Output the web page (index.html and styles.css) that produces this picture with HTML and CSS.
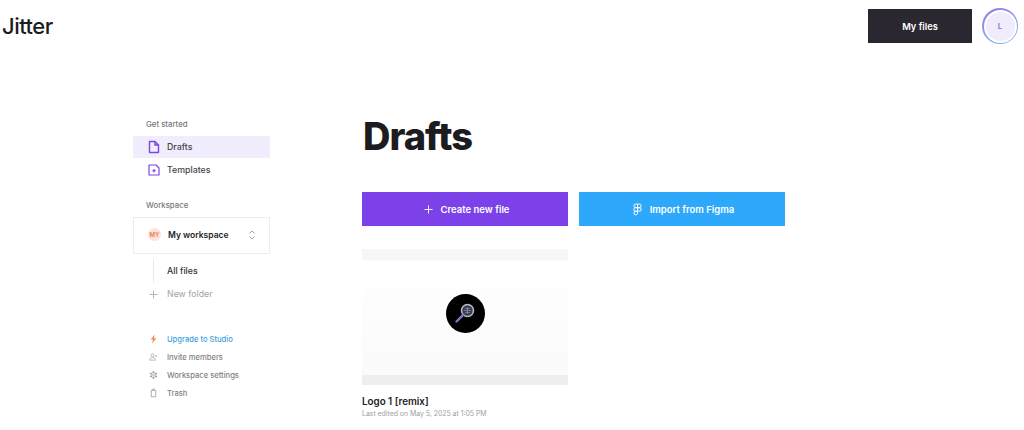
FILE: index.html
```html
<!DOCTYPE html>
<html lang="en">
<head>
    <meta charset="UTF-8">
    <meta name="viewport" content="width=device-width, initial-scale=1.0">
    <title>Jitter - Drafts</title>
    <link rel="stylesheet" href="styles.css">
</head>
<body>
    <header class="topbar">
        <div class="logo">Jitter</div>
        <div class="topbar-right">
            <button class="files-button">My files</button>
            <div class="avatar"><span>L</span></div>
        </div>
    </header>

    <div class="layout">
        <aside class="sidebar">
            <div class="side-label">Get started</div>
            <a class="nav-item active">
                <svg class="nav-icon" viewBox="0 0 14 14" fill="none" stroke="#7c45e8" stroke-width="1.4"><path d="M2.500 1.500h5.500l3.500 3.500v7.500h-9z" stroke-linejoin="round"/><path d="M8 1.500v3.500h3.500"/></svg>
                Drafts
            </a>
            <a class="nav-item">
                <svg class="nav-icon" viewBox="0 0 14 14" fill="none" stroke="#7c45e8" stroke-width="1.2"><path d="M2 2h7l3 3v7H2z" stroke-linejoin="round"/><path d="M7 6v3.500M5.250 7.750h3.500"/></svg>
                Templates
            </a>

            <div class="side-label workspace-label">Workspace</div>
            <div class="workspace">
                <span class="workspace-badge">MY</span>
                <span class="workspace-name">My workspace</span>
                <svg class="workspace-caret" viewBox="0 0 8 12" fill="none" stroke="#9a9a9a" stroke-width="0.9"><path d="M1.500 4.500 4 2l2.500 2.500M1.500 7.500 4 10l2.500-2.500"/></svg>
            </div>

            <div class="folders">
                <div class="folder-item">All files</div>
            </div>
            <a class="new-folder">
                <svg class="new-folder-icon" viewBox="0 0 10 10" fill="none" stroke="#a8a8a8" stroke-width="0.9"><path d="M5 0.500v9M0.500 5h9"/></svg>
                New folder
            </a>

            <div class="side-links">
                <a class="side-link upgrade">
                    <svg class="link-icon" viewBox="0 0 10 10"><path d="M6.200 0 2 5.600h2.300L3.600 10 8 4.300H5.500z" fill="#ee8a55"/></svg>
                    Upgrade to Studio
                </a>
                <a class="side-link">
                    <svg class="link-icon" viewBox="0 0 10 10" fill="none" stroke="#999" stroke-width="0.7"><circle cx="4" cy="3.200" r="1.700"/><path d="M0.800 8.500c0-2 1.400-2.800 3.200-2.800s3.200 0.800 3.200 2.800z"/><path d="M8 3v2M7 4h2"/></svg>
                    Invite members
                </a>
                <a class="side-link">
                    <svg class="link-icon" viewBox="0 0 10 10" fill="none" stroke="#999"><circle cx="5" cy="5" r="2.800" stroke-width="1"/><path d="M5 0.500v1.500M5 8v1.500M1.100 2.750l1.300 0.750M7.600 6.500l1.300 0.750M1.100 7.250l1.300-0.750M7.600 3.500l1.300-0.750" stroke-width="1.200"/><circle cx="5" cy="5" r="1" stroke-width="0.7"/></svg>
                    Workspace settings
                </a>
                <a class="side-link">
                    <svg class="link-icon" viewBox="0 0 10 10" fill="none" stroke="#999" stroke-width="0.9"><path d="M2.500 2.200h5v7h-5zM3.200 0.800h3.600"/></svg>
                    Trash
                </a>
            </div>
        </aside>

        <main class="main">
            <h1>Drafts</h1>
            <div class="actions">
                <button class="action create">
                    <svg class="action-icon" viewBox="0 0 10 10" fill="none" stroke="#fff" stroke-width="1"><path d="M5 0.500v9M0.500 5h9"/></svg>
                    Create new file
                </button>
                <button class="action figma">
                    <svg class="action-icon figma-icon" viewBox="0 0 8 12" fill="none" stroke="#fff" stroke-width="0.900"><path d="M4 1H2.300a1.650 1.650 0 0 0 0 3.300H4zM4 1h1.700a1.650 1.650 0 0 1 0 3.300H4zM4 4.300H2.300a1.650 1.650 0 0 0 0 3.400H4zM4 6a1.700 1.700 0 1 0 3.400 0A1.700 1.700 0 0 0 4 6zM4 7.700H2.300A1.650 1.650 0 1 0 4 9.350z"/></svg>
                    Import from Figma
                </button>
            </div>

            <div class="card">
                <div class="thumb">
                    <div class="thumb-circle">
                        <svg class="thumb-icon" viewBox="0 0 24 24" fill="none">
                            <circle cx="14.500" cy="9.500" r="6" fill="#3a3d52" stroke="#b9bbc6" stroke-width="1.500"/>
                            <path d="M11 9.500h7M14.500 6v7M12 7.500h5M12 11.500h5" stroke="#8b8ea3" stroke-width="0.700"/>
                            <path d="M10.200 13.800 3.500 20.500" stroke="#7b7bc4" stroke-width="2.400" stroke-linecap="round"/>
                        </svg>
                    </div>
                </div>
                <div class="card-title">Logo 1 [remix]</div>
                <div class="card-date">Last edited on May 5, 2025 at 1:05 PM</div>
            </div>
        </main>
    </div>
</body>
</html>
```

FILE: styles.css
```css
* {
    margin: 0;
    padding: 0;
    box-sizing: border-box;
}

body {
    font-family: 'Inter', sans-serif;
    background: white;
    color: #1c1c1e;
    height: 430px;
    overflow: hidden;
}

.topbar {
    display: flex;
    justify-content: space-between;
    align-items: flex-start;
    padding: 8px 6px 0 2px;
    height: 63px;
}

.logo {
    font-size: 22px;
    font-weight: 550;
    letter-spacing: -0.5px;
    line-height: 36px;
}

.topbar-right {
    display: flex;
    align-items: center;
    gap: 10px;
}

.files-button {
    width: 104px;
    height: 34px;
    background: #2a2731;
    color: white;
    border: none;
    font-family: inherit;
    font-size: 9.300px;
    font-weight: 600;
}

.avatar {
    width: 36px;
    height: 36px;
    border-radius: 50%;
    padding: 1.500px;
    background: linear-gradient(160deg, #9a7de8 0%, #7db8ea 100%);
}

.avatar span {
    display: flex;
    align-items: center;
    justify-content: center;
    width: 100%;
    height: 100%;
    border-radius: 50%;
    border: 2px solid white;
    background: #f1ecfc;
    color: #8b6fd8;
    font-size: 8px;
    font-weight: 600;
}

.layout {
    display: flex;
    padding-left: 133px;
}

.sidebar {
    width: 137px;
    margin-right: 92px;
    padding-top: 56px;
}

.side-label {
    font-size: 7.800px;
    font-weight: 500;
    color: #77777b;
    line-height: 10px;
    padding-left: 13px;
    margin-bottom: 7px;
}

.workspace-label {
    margin-top: 19px;
    margin-bottom: 7px;
}

.nav-item {
    display: flex;
    align-items: center;
    gap: 6px;
    height: 22px;
    padding-left: 14px;
    padding-bottom: 1px;
    margin-bottom: 1px;
    font-size: 8.800px;
    font-weight: 500;
    color: #44444a;
}

.nav-item.active {
    background: #f2edfc;
}

.nav-icon {
    width: 14px;
    height: 14px;
}

.workspace {
    display: flex;
    align-items: center;
    height: 37px;
    padding-left: 14px;
    padding-bottom: 2px;
    border: 1px solid #ededed;
}

.workspace-badge {
    display: flex;
    align-items: center;
    justify-content: center;
    width: 13px;
    height: 13px;
    border-radius: 50%;
    background: #fde3d8;
    color: #e8795a;
    font-size: 6px;
    font-weight: 600;
    margin-right: 7px;
}

.workspace-name {
    font-size: 8.500px;
    font-weight: 600;
    color: #222;
}

.workspace-caret {
    width: 8px;
    height: 12px;
    margin-left: 19px;
}

.folders {
    margin-left: 20px;
    border-left: 1px solid #e8e8e8;
    padding-left: 13px;
    margin-top: 5px;
}

.folder-item {
    font-size: 8.800px;
    font-weight: 500;
    color: #333;
    line-height: 24px;
}

.new-folder {
    display: flex;
    align-items: center;
    gap: 9px;
    padding-left: 16px;
    margin-top: 4px;
    font-size: 8.800px;
    color: #a3a3a3;
    line-height: 14px;
}

.new-folder-icon {
    width: 9px;
    height: 9px;
}

.side-links {
    margin-top: 29px;
}

.side-link {
    display: flex;
    align-items: center;
    gap: 9px;
    height: 18px;
    padding-left: 16px;
    font-size: 7.600px;
    font-weight: 500;
    color: #808084;
}

.side-link.upgrade {
    color: #3f9fe0;
}

.link-icon {
    width: 9px;
    height: 10px;
}

.main {
    width: 424px;
    padding-top: 47px;
}

h1 {
    font-size: 38px;
    font-weight: 800;
    letter-spacing: -1px;
    line-height: 52px;
    color: #1c1c1e;
    margin-bottom: 30px;
    padding-left: 1px;
}

.actions {
    display: flex;
    gap: 11px;
    margin-bottom: 23px;
}

.action {
    display: flex;
    align-items: center;
    justify-content: center;
    gap: 8px;
    width: 206px;
    height: 34px;
    border: none;
    color: white;
    font-family: inherit;
    font-size: 9.500px;
    font-weight: 600;
}

.action.create {
    padding-left: 3px;
    background: #7c41e8;
}

.action.figma {
    padding-left: 3px;
    background: #2ea8fb;
}

.action-icon {
    width: 9px;
    height: 9px;
}

.figma-icon {
    width: 9px;
    height: 13px;
}

.card {
    width: 206px;
}

.thumb {
    display: flex;
    align-items: center;
    justify-content: center;
    height: 136px;
    padding-bottom: 8px;
    background: linear-gradient(to bottom, #f6f6f6 0, #f6f6f6 11px, #ffffff 12px, #fafafa 126px, #eeeeee 126px, #eeeeee 100%);
}

.thumb-circle {
    display: flex;
    align-items: center;
    justify-content: center;
    width: 39px;
    height: 39px;
    border-radius: 50%;
    background: black;
}

.thumb-icon {
    width: 24px;
    height: 24px;
}

.card-title {
    font-size: 9.800px;
    font-weight: 600;
    line-height: 14px;
    margin-top: 10px;
    color: #222;
}

.card-date {
    font-size: 6.900px;
    color: #a0a0a0;
    line-height: 10px;
}
```
